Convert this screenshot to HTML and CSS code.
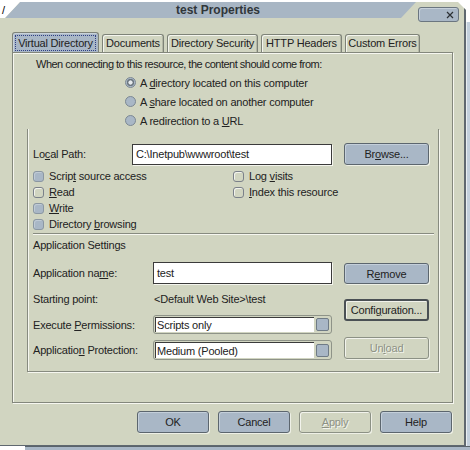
FILE: index.html
```html
<!DOCTYPE html>
<html lang="en">

<head>
    <meta charset="UTF-8">
    <meta name="viewport" content="width=device-width, initial-scale=1.0">
    <title>test Properties</title>
    <link rel="stylesheet" href="styles.css">
</head>

<body>
    <div class="desktop">
        <span class="stray">/</span>
        <div class="back-window"></div>
        <div class="bottom-window"></div>

        <div class="window">
            <div class="titlebar">test Properties</div>
            <button class="close" type="button" aria-label="Close">
                <svg width="8" height="8" viewBox="0 0 8 8">
                    <path d="M1 1 L7 7 M7 1 L1 7" stroke="#2b3034" stroke-width="1.2" fill="none" />
                </svg>
            </button>

            <!-- Tab strip -->
            <div class="tabs">
                <div class="tab active t-virtual"><span>Virtual Directory</span></div>
                <div class="tab t-docs">Documents</div>
                <div class="tab t-security">Directory Security</div>
                <div class="tab t-headers">HTTP Headers</div>
                <div class="tab t-errors">Custom Errors</div>
            </div>

            <div class="panel">
                <p class="intro">When connecting to this resource, the content should come from:</p>

                <div class="radios">
                    <div class="radio-row"><span class="radio checked"></span><span>A <u>d</u>irectory located on this computer</span></div>
                    <div class="radio-row"><span class="radio"></span><span>A <u>s</u>hare located on another computer</span></div>
                    <div class="radio-row"><span class="radio"></span><span>A redirection to a <u>U</u>RL</span></div>
                </div>

                <div class="group">
                    <div class="path-row">
                        <span class="path-label">Lo<u>c</u>al Path:</span>
                        <div class="field path-field">C:\Inetpub\wwwroot\test</div>
                        <button class="btn browse" type="button">Br<u>o</u>wse...</button>
                    </div>

                    <div class="checks">
                        <div class="check-col left">
                            <div class="check-row"><span class="box on"></span><span>Scrip<u>t</u> source access</span></div>
                            <div class="check-row"><span class="box"></span><span><u>R</u>ead</span></div>
                            <div class="check-row"><span class="box on"></span><span><u>W</u>rite</span></div>
                            <div class="check-row"><span class="box on"></span><span>Directory <u>b</u>rowsing</span></div>
                        </div>
                        <div class="check-col">
                            <div class="check-row"><span class="box"></span><span>Log <u>v</u>isits</span></div>
                            <div class="check-row"><span class="box"></span><span><u>I</u>ndex this resource</span></div>
                        </div>
                    </div>

                    <div class="separator"></div>
                    <div class="section-title">Application Settings</div>

                    <div class="app">
                        <div class="app-fields">
                            <div class="app-row r-name">
                                <span class="app-label">Application na<u>m</u>e:</span>
                                <div class="field app-field">test</div>
                            </div>
                            <div class="app-row r-start">
                                <span class="app-label">Starting point:</span>
                                <span class="app-value">&lt;Default Web Site&gt;\test</span>
                            </div>
                            <div class="app-row r-exec">
                                <span class="app-label">Execute <u>P</u>ermissions:</span>
                                <div class="select">
                                    <div class="select-value">Scripts only</div>
                                    <span class="select-btn"></span>
                                </div>
                            </div>
                            <div class="app-row r-prot">
                                <span class="app-label">Applicatio<u>n</u> Protection:</span>
                                <div class="select">
                                    <div class="select-value">Medium (Pooled)</div>
                                    <span class="select-btn"></span>
                                </div>
                            </div>
                        </div>

                        <div class="app-buttons">
                            <button class="btn b-remove" type="button"><span>R<u>e</u>move</span></button>
                            <button class="btn default b-config" type="button"><span>Confi<u>g</u>uration...</span></button>
                            <button class="btn disabled b-unload" type="button"><span>Un<u>l</u>oad</span></button>
                        </div>
                    </div>
                </div>
            </div>

            <!-- Dialog buttons -->
            <div class="footer">
                <button class="btn" type="button">OK</button>
                <button class="btn" type="button">Cancel</button>
                <button class="btn disabled" type="button"><span><u>A</u>pply</span></button>
                <button class="btn" type="button">Help</button>
            </div>
        </div>
    </div>
</body>

</html>
```

FILE: styles.css
```css
* {
    box-sizing: border-box;
}

body {
    margin: 0;
    background: #fff;
    font-family: 'Liberation Sans', Arial, sans-serif;
    font-size: 11px;
    letter-spacing: -0.2px;
    color: #222;
}

.desktop {
    position: relative;
    width: 470px;
    height: 450px;
    overflow: hidden;
    background: #fff;
}

.stray {
    position: absolute;
    left: 2px;
    top: 4px;
    font-size: 11px;
    color: #000;
}

.back-window {
    position: absolute;
    left: 466px;
    top: 22px;
    width: 4px;
    height: 424px;
    background: #c3d0dc;
    border-left: 1px solid #e9eef2;
}

.bottom-window {
    position: absolute;
    left: 25px;
    top: 446px;
    width: 445px;
    height: 4px;
    background: #a9b7c6;
    border-top: 1px solid #59636b;
}

/* Dialog window */
.window {
    position: absolute;
    left: 0;
    top: 2px;
    width: 466px;
    height: 444px;
    background: #d1d5c1;
    border-right: 2px solid #5f686f;
    border-bottom: 1px solid #5f686f;
    clip-path: polygon(0 16px, 5px 16px, 20px 0, 458px 0, 466px 8px, 466px 100%, 0 100%);
}

.titlebar {
    width: 416px;
    height: 16px;
    background: #a8b6c4;
    clip-path: polygon(5px 16px, 20px 0, 416px 0, 401px 16px);
    padding-left: 20px;
    font-size: 12px;
    font-weight: bold;
    letter-spacing: 0;
    line-height: 16px;
    text-align: center;
    color: #30363a;
}

.close {
    position: absolute;
    left: 418px;
    top: 5px;
    width: 41px;
    height: 15px;
    padding: 0 4px 0 0;
    display: flex;
    align-items: center;
    justify-content: flex-end;
    background: #a9b7c6;
    border: 1px solid #6b7680;
    border-radius: 3px;
    box-shadow: inset 1px 1px 0 #c6d0da;
}

/* Tabs */
.tabs {
    display: flex;
    align-items: flex-end;
    gap: 3px;
    height: 20px;
    margin: 14px 0 0 12px;
}

.tab {
    height: 18px;
    border: 1px solid #7e8378;
    border-bottom: none;
    border-radius: 3px 3px 0 0;
    box-shadow: inset 1px 1px 0 #f4f5ee, inset -1px 0 0 #b4b8a6;
    line-height: 17px;
    text-align: center;
    white-space: nowrap;
}

.tab.active {
    height: 20px;
    padding: 2px 2px 0;
    background: #a9b7c6;
    box-shadow: inset 1px 1px 0 #c8d2dc;
}

.tab.active span {
    display: block;
    height: 16px;
    border: 1px dotted #2f3f84;
    line-height: 14px;
}

.t-virtual { width: 87px; }
.t-docs { width: 62px; }
.t-security { width: 91px; }
.t-headers { width: 81px; }
.t-errors { width: 75px; }

/* Tab page */
.panel {
    width: 441px;
    height: 351px;
    margin-left: 12px;
    padding: 4px 0 0 14px;
    border: 1px solid #83877c;
    box-shadow: inset 1px 1px 0 #f6f7f0, 1px 1px 0 #f6f7f0;
}

.intro {
    margin: 0 0 0 9px;
    line-height: 14px;
    letter-spacing: -0.5px;
}

.radios {
    margin-top: 2px;
    padding-left: 98px;
}

.radio-row {
    display: flex;
    align-items: center;
    gap: 4px;
    height: 19px;
}

.radio {
    width: 11px;
    height: 11px;
    border-radius: 50%;
    background: #a9b7c6;
    border: 1px solid #7c8893;
}

.radio.checked {
    background: radial-gradient(circle, #e6eaec 0 1.8px, #6c7780 2.4px 3.4px, #a9b7c6 3.9px);
}

.group {
    width: 412px;
    margin-top: -1px;
    padding: 14px 0 11px 5px;
    border: 1px solid #878b80;
    border-top: none;
    box-shadow: inset 1px 0 0 #f6f7f0, 1px 1px 0 #f6f7f0;
}

.path-row {
    display: flex;
    align-items: center;
    height: 22px;
}

.path-label {
    width: 99px;
}

.field {
    height: 21px;
    padding: 0 3px;
    background: #fff;
    border: 1px solid #3b3b3b;
    box-shadow: 1px 1px 0 #f4f5ee;
    line-height: 19px;
    white-space: nowrap;
}

.path-field {
    width: 200px;
}

.browse {
    width: 85px;
    height: 22px;
    margin-left: 12px;
}

.checks {
    display: flex;
    margin-top: 3px;
}

.check-col.left {
    width: 200px;
}

.check-row {
    display: flex;
    align-items: center;
    gap: 5px;
    height: 16px;
}

.box {
    width: 11px;
    height: 11px;
    border-radius: 3px;
    background: #d1d5c1;
    border: 1px solid #7b818a;
    box-shadow: inset 1px 1px 0 #f2f3ec;
}

.box.on {
    background: #a9b7c6;
    border-color: #8b97a2;
    box-shadow: inset 1px 1px 0 #bfcad5;
}

.separator {
    height: 2px;
    margin: 1px 4px 0 0;
    border-top: 1px solid #878b80;
    border-bottom: 1px solid #f6f7f0;
}

.section-title {
    margin-top: 3px;
    line-height: 14px;
}

.app {
    display: flex;
    margin-top: 10px;
}

.app-fields {
    width: 299px;
}

.app-row {
    display: flex;
    align-items: center;
}

.app-label {
    width: 120px;
    white-space: nowrap;
}

.r-name { height: 22px; }
.r-start { height: 30px; }
.r-exec { height: 19px; margin-top: 1px; }
.r-prot { height: 20px; margin-top: 6px; }

.app-field {
    width: 179px;
    height: 22px;
    line-height: 20px;
}

.app-value {
    padding-left: 1px;
}

.select {
    display: flex;
    align-items: center;
    width: 179px;
    height: 100%;
    padding: 1px;
    background: #d1d5c1;
    border: 1px solid #8e9388;
    border-radius: 3px;
}

.select-value {
    flex: 1;
    height: 100%;
    padding-left: 1px;
    background: #fff;
    border-top: 1px solid #3b3b3b;
    border-left: 1px solid #3b3b3b;
    display: flex;
    align-items: center;
}

.select-btn {
    width: 13px;
    height: 13px;
    margin: 0 1px 0 2px;
    background: #a9b7c6;
    border: 1px solid #6f7b86;
    border-radius: 2px;
}

.app-buttons {
    display: flex;
    flex-direction: column;
    margin-left: 12px;
}

.app-buttons .btn {
    width: 85px;
    height: 22px;
}

.app-buttons .b-remove {
    margin-top: 1px;
    height: 21px;
}

.b-config { margin-top: 15px; }
.b-unload { margin-top: 16px; }

/* Buttons */
.btn {
    display: flex;
    align-items: center;
    justify-content: center;
    padding: 0;
    font: inherit;
    letter-spacing: inherit;
    color: #222;
    background: #a9b7c6;
    border: 1px solid #5c666e;
    border-radius: 3px;
    box-shadow: inset 1px 1px 0 #c4cfda, 1px 1px 0 #eef0e6;
    white-space: nowrap;
}

.btn.default {
    background: #d1d5c1;
    border: 2px solid #4a5054;
    box-shadow: inset 1px 1px 0 #f2f3ec;
}

.btn.disabled {
    background: #d1d5c1;
    border-color: #8c9185;
    color: #8d9184;
    text-shadow: 1px 1px 0 #f4f5ef;
    box-shadow: inset 1px 1px 0 #f2f3ec, 1px 1px 0 #eef0e6;
}

.footer {
    display: flex;
    justify-content: flex-end;
    gap: 9px;
    width: 441px;
    margin: 8px 0 0 12px;
    padding-right: 1px;
}

.footer .btn {
    width: 72px;
    height: 22px;
}
```
